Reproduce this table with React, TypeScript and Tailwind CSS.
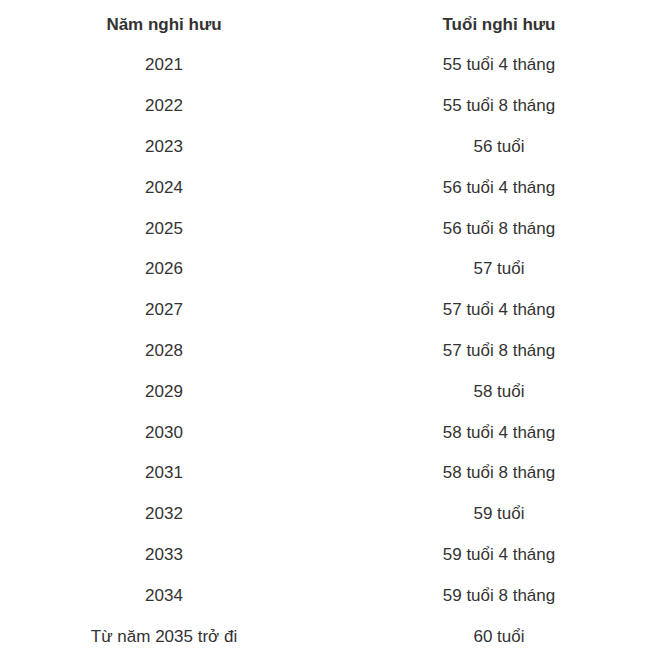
const rows: [string, string][] = [
  ["2021", "55 tuổi 4 tháng"],
  ["2022", "55 tuổi 8 tháng"],
  ["2023", "56 tuổi"],
  ["2024", "56 tuổi 4 tháng"],
  ["2025", "56 tuổi 8 tháng"],
  ["2026", "57 tuổi"],
  ["2027", "57 tuổi 4 tháng"],
  ["2028", "57 tuổi 8 tháng"],
  ["2029", "58 tuổi"],
  ["2030", "58 tuổi 4 tháng"],
  ["2031", "58 tuổi 8 tháng"],
  ["2032", "59 tuổi"],
  ["2033", "59 tuổi 4 tháng"],
  ["2034", "59 tuổi 8 tháng"],
  ["Từ năm 2035 trở đi", "60 tuổi"],
];

export default function App() {
  return (
    <div className="w-[663px] h-[653px] overflow-hidden bg-white pt-[4px] text-[17px] text-[#333] font-['Liberation_Sans',Arial,sans-serif]">
      <div className="grid grid-cols-[328px_342px] font-bold">
        <div className="h-[40.8px] flex items-center justify-center">Năm nghỉ hưu</div>
        <div className="h-[40.8px] flex items-center justify-center">Tuổi nghỉ hưu</div>
      </div>
      {rows.map(([year, age]) => (
        <div key={year} className="grid grid-cols-[328px_342px]">
          <div className="h-[40.8px] flex items-center justify-center">{year}</div>
          <div className="h-[40.8px] flex items-center justify-center">{age}</div>
        </div>
      ))}
    </div>
  );
}
